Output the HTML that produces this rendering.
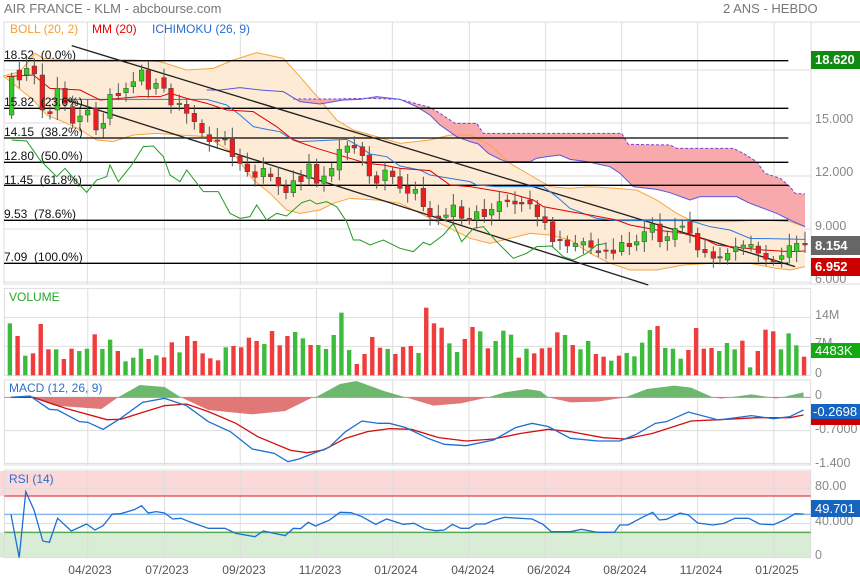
<!DOCTYPE html><html><head><meta charset="utf-8"><style>
body{margin:0;width:860px;height:580px;background:#fff;position:relative;overflow:hidden;font-family:"Liberation Sans",sans-serif}
.t{position:absolute;white-space:nowrap;line-height:1}
svg{position:absolute;left:0}
.ax{color:#888;font-size:12.5px;left:815px}
.fb{font-size:12px;color:#111;left:4px}
.bx{position:absolute;left:811px;width:49px;color:#fff;font-size:13px;font-weight:bold;padding-left:4px;box-sizing:border-box}
.dt{font-size:12px;color:#555;top:564px;transform:translateX(-50%)}
</style></head><body>
<div class="t" style="left:4px;top:2px;font-size:13px;color:#777">AIR FRANCE - KLM - abcbourse.com</div>
<div class="t" style="left:723px;top:2px;font-size:13px;color:#777">2 ANS - HEBDO</div>

<svg id="m" width="860" height="290" viewBox="0 0 2580 870" preserveAspectRatio="none" style="top:0">
<g stroke="#ddd" stroke-width="3" fill="none">
<rect x="12" y="66" width="3420" height="786"/>
<line x1="12" y1="66" x2="2433" y2="66"/><line x1="2433" y1="66" x2="2433" y2="852"/><line x1="12" y1="852" x2="2433" y2="852"/><line x1="12" y1="66" x2="12" y2="852"/>
<path d="M262 66V852M493 66V852M721 66V852M950 66V852M1177 66V852M1408 66V852M1637 66V852M1865 66V852M2093 66V852M2322 66V852"/>
<path d="M12 210H2433M12 369H2433M12 528H2433M12 687H2433M12 846H2433"/>
</g>
<g id="mg"></g>
</svg>

<div class="t" style="left:10px;top:23px;font-size:12px;color:#f5a030">BOLL (20, 2)</div>
<div class="t" style="left:92px;top:23px;font-size:12px;color:#e00">MM (20)</div>
<div class="t" style="left:152px;top:23px;font-size:12px;color:#2a6fd0">ICHIMOKU (26, 9)</div>
<div class="t fb" style="top:49px">18.52 &nbsp;(0.0%)</div>
<div class="t fb" style="top:96px">15.82 &nbsp;(23.6%)</div>
<div class="t fb" style="top:126px">14.15 &nbsp;(38.2%)</div>
<div class="t fb" style="top:150px">12.80 &nbsp;(50.0%)</div>
<div class="t fb" style="top:174px">11.45 &nbsp;(61.8%)</div>
<div class="t fb" style="top:208px">9.53 &nbsp;(78.6%)</div>
<div class="t fb" style="top:251px">7.09 &nbsp;(100.0%)</div>
<div class="t ax" style="top:113px">15.000</div>
<div class="t ax" style="top:166px">12.000</div>
<div class="t ax" style="top:220px">9.000</div>
<div class="t ax" style="top:273px">6.000</div>
<div class="bx" style="top:51px;height:18px;line-height:18px;background:#118a11">18.620</div>
<div class="bx" style="top:236px;height:19px;line-height:19px;background:#666">8.154</div>
<div class="bx" style="top:258px;height:18px;line-height:18px;background:#c00">6.952</div>

<svg id="b" width="860" height="295" viewBox="0 0 1568 885" preserveAspectRatio="none" style="top:285px">
<g id="bg"></g>
</svg>
<div class="t" style="left:9px;top:291px;font-size:12px;color:#2aa52a">VOLUME</div>
<div class="t" style="left:9px;top:382px;font-size:12px;color:#2a6fd0">MACD (12, 26, 9)</div>
<div class="t" style="left:9px;top:473px;font-size:12px;color:#2a6fd0">RSI (14)</div>
<div class="t ax" style="top:309px">14M</div>
<div class="t ax" style="top:337px">7M</div>
<div class="t ax" style="top:367px">0</div>
<div class="t ax" style="top:389px">0</div>
<div class="t ax" style="top:423px">-0.7000</div>
<div class="t ax" style="top:457px">-1.400</div>
<div class="t ax" style="top:480px">80.00</div>
<div class="t ax" style="top:515px">40.000</div>
<div class="t ax" style="top:549px">0</div>
<div class="bx" style="top:343px;height:15px;line-height:15px;background:#11aa11;font-weight:normal">4483K</div>
<div class="bx" style="top:418px;height:7px;background:#c00"></div>
<div class="bx" style="top:404px;height:15px;line-height:15px;background:#1565c0;font-weight:normal;padding-left:2px">-0.2698</div>
<div class="bx" style="top:500px;height:17px;line-height:17px;background:#1565c0;font-weight:normal">49.701</div>
<div class="t dt" style="left:90px">04/2023</div>
<div class="t dt" style="left:167px">07/2023</div>
<div class="t dt" style="left:244px">09/2023</div>
<div class="t dt" style="left:320px">11/2023</div>
<div class="t dt" style="left:396px">01/2024</div>
<div class="t dt" style="left:473px">04/2024</div>
<div class="t dt" style="left:549px">06/2024</div>
<div class="t dt" style="left:625px">08/2024</div>
<div class="t dt" style="left:701px">11/2024</div>
<div class="t dt" style="left:777px">01/2025</div>

<script>
var NS="http://www.w3.org/2000/svg";
function el(p,t,a){var e=document.createElementNS(NS,t);for(var k in a)e.setAttribute(k,a[k]);p.appendChild(e);return e}
function pts(a,o){o=o||0;return a.map(function(p){return (p[0]+o)+","+p[1]}).join(" ")}
function sh(a,o){return a.map(function(p){return [p[0]+o,p[1]]})}
var mg=document.getElementById("mg");
// Bollinger
var bu=[[10,228],[60,215],[105,160],[130,175],[200,180],[300,180],[400,180],[480,185],[560,210],[640,205],[700,180],[770,158],[850,175],[900,230],[960,300],[1010,360],[1060,390],[1130,410],[1200,430],[1290,420]].concat(sh([[60,405],[120,405],[180,435],[240,490],[300,525],[360,560],[420,565],[480,560],[560,565],[620,570],[680,600],[740,640],[790,665],[900,665],[1000,660],[1080,665],[1125,680]],1290));
var bl=[[10,228],[100,300],[140,345],[200,370],[250,395],[290,420],[340,425],[400,405],[470,400],[540,405],[620,410],[700,460],[760,540],[810,580],[860,630],[900,640],[960,630],[1000,610],[1050,595],[1130,600],[1200,610],[1290,655]].concat(sh([[60,685],[120,715],[180,730],[240,715],[300,700],[360,705],[420,720],[480,760],[540,790],[600,810],[680,810],[760,795],[840,790],[900,790],[960,790],[1040,805],[1080,810],[1125,800]],1290));
el(mg,"polygon",{points:pts(bu.concat(bl.slice().reverse())),fill:"#fdebd5"});
// cloud
var cu=[[880,297],[1000,297],[1100,295],[1200,298],[1290,322]].concat(sh([[30,340],[75,370],[140,370],[160,400],[575,400],[595,433],[720,435],[740,445],[910,445],[940,460],[980,485],[1005,520],[1050,535],[1080,560],[1095,580],[1125,582]],1290));
var cl=[[620,270],[660,270],[720,263],[780,270],[850,275],[900,305],[960,312],[1030,300],[1080,298],[1130,290],[1200,298],[1250,320],[1290,345]].concat(sh([[30,375],[80,410],[120,425],[145,432],[175,460],[210,478],[230,485],[300,485],[320,475],[350,470],[390,465],[420,478],[470,485],[540,500],[570,520],[610,560],[680,568],[720,578],[780,600],[810,590],[920,590],[940,600],[960,610],[1000,625],[1040,640],[1080,660],[1125,680]],1290));
el(mg,"polygon",{points:pts(cu.concat(cl.filter(function(p){return p[0]>=880}).reverse())),fill:"#f8a9ab"});
el(mg,"polyline",{points:pts(bu),fill:"none",stroke:"#f7a440","stroke-width":3});
el(mg,"polyline",{points:pts(bl),fill:"none",stroke:"#f7a440","stroke-width":3});
el(mg,"polyline",{points:pts(cu),fill:"none",stroke:"#7a3fd0","stroke-width":3,"stroke-dasharray":"9,6"});
el(mg,"polyline",{points:pts(cl),fill:"none",stroke:"#5a55e0","stroke-width":3});
// fib lines
[182,325,414,487,556,661,790].forEach(function(y){el(mg,"line",{x1:12,y1:y,x2:2365,y2:y,stroke:"#000","stroke-width":4})});
// channel
el(mg,"line",{x1:215,y1:137,x2:2385,y2:800,stroke:"#222","stroke-width":4});
el(mg,"line",{x1:200,y1:300,x2:1945,y2:855,stroke:"#222","stroke-width":4});
// blue ichimoku line
var kb=[[150,298],[620,298],[680,315],[720,345],[760,380],[800,388],[840,395],[870,415],[900,425],[1000,420],[1040,418],[1080,440],[1110,462],[1160,470],[1200,498],[1260,510],[1290,525]].concat(sh([[120,545],[140,555],[200,560],[340,560],[380,590],[420,625],[500,655],[560,662],[780,662],[840,680],[900,690],[960,715],[1125,718]],1290));
el(mg,"polyline",{points:pts(kb),fill:"none",stroke:"#2a7ae0","stroke-width":3});
var mm=[[20,230],[100,225],[150,265],[240,270],[300,300],[360,295],[420,290],[480,290],[510,280],[560,295],[620,310],[680,330],[760,335],[830,380],[880,420],[950,445],[1000,460],[1050,475],[1100,490],[1150,495],[1200,505],[1290,512]].concat(sh([[60,555],[120,560],[240,580],[310,600],[340,620],[420,635],[480,645],[560,660],[600,675],[680,690],[760,700],[830,720],[860,735],[900,740],[1000,750],[1080,755],[1125,753]],1290));
el(mg,"polyline",{points:pts(mm),fill:"none",stroke:"#e00000","stroke-width":3});
var ch=[[35,420],[80,423],[120,480],[170,530],[195,505],[225,540],[260,577],[290,540],[320,530],[330,495],[355,545],[395,495],[430,440],[460,438],[490,470],[510,525],[540,545],[560,510],[610,575],[655,575],[690,640],[720,655],[750,650],[770,615],[800,660],[830,640],[860,648],[905,608],[930,600],[950,612],[980,605],[1010,620],[1040,665],[1060,720],[1080,720],[1110,735],[1150,720],[1200,745],[1240,755],[1270,727],[1290,735]].concat(sh([[40,705],[70,670],[95,725],[130,685],[160,680],[200,725],[250,775],[290,760],[320,740],[365,738],[400,770],[430,780],[470,760],[500,735],[530,730]],1290));
el(mg,"polyline",{points:pts(ch),fill:"none",stroke:"#229922","stroke-width":3});
// candles
var C=[[35,230,345,'g'],[58,210,240,'r'],[80,205,225,'g'],[103,198,222,'r'],[127,225,330,'r'],[150,335,341,'r'],[172,265,330,'g'],[195,265,310,'r'],[218,320,370,'r'],[240,348,365,'g'],[263,330,345,'g'],[288,325,390,'r'],[310,370,385,'g'],[330,283,355,'g'],[355,280,287,'r'],[378,265,278,'g'],[400,245,260,'g'],[425,210,243,'g'],[445,210,268,'r'],[468,250,265,'g'],[492,233,265,'r'],[513,265,315,'r'],[538,310,314,'g'],[560,313,340,'r'],[583,340,365,'r'],[606,370,398,'r'],[628,404,425,'r'],[652,420,424,'r'],[675,416,420,'r'],[697,418,470,'r'],[720,468,490,'r'],[742,492,515,'r'],[765,515,532,'r'],[790,505,530,'g'],[812,522,530,'r'],[835,532,558,'r'],[858,558,578,'r'],[880,542,578,'g'],[903,528,545,'r'],[927,492,535,'g'],[950,493,550,'r'],[972,528,550,'g'],[995,505,528,'g'],[1018,448,510,'g'],[1042,438,457,'g'],[1063,436,444,'r'],[1087,440,467,'r'],[1108,465,528,'r'],[1130,527,550,'r'],[1155,510,542,'g'],[1178,513,530,'r'],[1200,530,565,'r'],[1223,558,580,'r'],[1246,568,580,'g'],[1270,565,620,'r']];
var R=[[0,625,650,'r'],[25,648,655,'r'],[48,645,652,'g'],[70,615,650,'g'],[95,620,655,'r'],[118,655,662,'r'],[140,635,660,'g'],[163,628,650,'r'],[185,628,645,'g'],[208,605,635,'g'],[232,600,605,'r'],[255,603,612,'r'],[275,607,612,'r'],[300,600,612,'r'],[322,615,650,'r'],[345,650,668,'r'],[368,665,725,'r'],[390,718,722,'r'],[412,720,738,'r'],[436,730,740,'g'],[460,725,735,'g'],[483,722,742,'r'],[505,752,758,'r'],[528,750,752,'r'],[550,750,760,'r'],[575,727,755,'g'],[598,730,740,'r'],[620,725,735,'g'],[643,695,725,'g'],[667,672,697,'g'],[690,672,725,'r'],[712,710,722,'g'],[735,685,718,'g'],[757,678,682,'g'],[780,665,700,'r'],[803,700,750,'r'],[825,748,758,'r'],[850,755,775,'r'],[870,770,772,'r'],[893,760,780,'g'],[917,740,755,'g'],[940,735,745,'g'],[963,733,742,'g'],[985,738,760,'r'],[1008,760,778,'r'],[1030,780,785,'r'],[1055,767,778,'g'],[1078,737,772,'g'],[1100,730,755,'g'],[1125,730,735,'r']];
R.forEach(function(c){C.push([c[0]+1290,c[1],c[2],c[3]])});
C.forEach(function(c,i){var w=12+(i*37%25);el(mg,"line",{x1:c[0],y1:c[1]-w,x2:c[0],y2:c[2]+12+(i*53%20),stroke:"#555","stroke-width":3});
el(mg,"rect",{x:c[0]-7,y:c[1],width:14,height:Math.max(4,c[2]-c[1]),fill:c[3]=='g'?'#33cc22':'#ee1c1c',stroke:"#444","stroke-width":1.5})});

// bottom panels
var bg=document.getElementById("bg");
var ns={"vector-effect":"non-scaling-stroke"};
function L(p,a){for(var k in ns)a[k]=ns[k];return el(bg,p,a)}
L("rect",{x:0,y:558,width:1478,height:75,fill:"#fdd8d8"});
L("rect",{x:0,y:742,width:1478,height:76,fill:"#d8ecd6"});
var gs={stroke:"#ddd","stroke-width":1,fill:"none"};
[[10,271],[285,540],[555,818]].forEach(function(r){L("rect",{x:8,y:r[0],width:1470,height:r[1]-r[0],stroke:"#ddd","stroke-width":1,fill:"none"})});
var vx=[160,300,438,577,716,855,994,1133,1272,1411];
vx.forEach(function(x){[[10,271],[285,540],[555,818]].forEach(function(r){L("line",{x1:x,y1:r[0],x2:x,y2:r[1],stroke:"#ddd","stroke-width":1})})});
[97,184,437,535,610,716].forEach(function(y){L("line",{x1:8,y1:y,x2:1478,y2:y,stroke:"#ddd","stroke-width":1})});
L("line",{x1:8,y1:633,x2:1478,y2:633,stroke:"#e06060","stroke-width":1.5});
L("line",{x1:8,y1:742,x2:1478,y2:742,stroke:"#55aa55","stroke-width":1.5});
L("line",{x1:8,y1:688,x2:1478,y2:688,stroke:"#88b8f0","stroke-width":1.5});
// volume
var V="G115,R153,G212,R205,R117,R193,G193,R222,R191,G198,G191,R148,G192,G164,R198,G229,G218,G191,R222,G211,R217,R172,G202,R153,R168,R205,R220,R226,G187,R183,R187,R158,R168,G177,R138,R181,R153,G141,G160,R180,G180,G192,G150,G83,G195,R237,R207,R156,R188,G192,R207,R186,R183,G204,R68,R115,R128,G175,G201,R162,R126,G139,R190,G168,G137,G149,R218,G191,R205,R190,R188,R142,G150,R180,G193,G168,R207,R215,G227,R212,G204,G214,G173,G135,R123,G189,G191,G221,R195,R129,R191,R189,G198,G174,G193,R167,G247,R198,R134,R139,G193,G145,G181,R215".split(",");
V.forEach(function(v,i){var x=18+i*(1448/(V.length-1));el(bg,"rect",{x:x-4,y:+v.slice(1),width:8,height:271-v.slice(1),fill:v[0]=='G'?'#3dbb3d':'#f03c3c'})});
// macd histogram
function area(a,c){el(bg,"polygon",{points:pts(a),fill:c})}
area([[215,337],[255,300],[300,306],[330,337]],"#6cb86c");
area([[575,337],[620,297],[650,288],[670,300],[700,318],[740,337]],"#6cb86c");
area([[890,337],[920,322],[960,312],[985,318],[1000,337]],"#6cb86c");
area([[1140,337],[1180,312],[1230,302],[1260,308],[1300,337]],"#6cb86c");
area([[1330,337],[1370,328],[1405,337]],"#6cb86c");
area([[1425,337],[1465,322],[1465,337]],"#6cb86c");
area([[60,337],[100,362],[150,368],[185,372],[215,337]],"#e07878");
area([[330,337],[380,375],[460,388],[520,378],[570,337]],"#e07878");
area([[740,337],[790,362],[840,355],[890,337]],"#e07878");
area([[1000,337],[1040,352],[1090,350],[1140,337]],"#e07878");
area([[1300,337],[1315,341],[1330,337]],"#e07878");area([[1405,337],[1415,341],[1425,337]],"#e07878");
L("line",{x1:8,y1:337,x2:1478,y2:337,stroke:"#999","stroke-width":1});
var mb=[[20,337],[55,333],[90,373],[105,375],[145,410],[160,412],[188,433],[220,400],[260,352],[300,340],[340,362],[380,410],[420,440],[460,492],[500,505],[525,530],[545,522],[600,487],[630,440],[660,408],[690,415],[710,415],[740,428],[780,460],[810,478],[850,482],[900,465],[940,428],[970,415],[1000,425],[1040,460],[1090,468],[1130,468],[1160,448],[1195,415],[1215,410],[1255,381],[1310,405],[1370,392],[1410,401],[1440,395],[1465,375]];
var mr=[[20,337],[60,337],[120,370],[195,404],[220,403],[260,382],[300,362],[340,357],[380,380],[430,415],[470,455],[530,496],[560,503],[590,495],[630,460],[670,440],[710,431],[750,433],[800,458],[850,468],[900,462],[950,445],[1000,433],[1040,440],[1100,458],[1140,462],[1190,445],[1260,408],[1310,404],[1380,398],[1440,398],[1465,390]];
L("polyline",{points:pts(mr),fill:"none",stroke:"#d01010","stroke-width":1.3});
L("polyline",{points:pts(mb),fill:"none",stroke:"#1e6fd0","stroke-width":1.3});
var rs=[[20,688],[35,818],[47,620],[62,675],[78,768],[90,772],[105,700],[130,738],[158,717],[173,735],[188,722],[205,687],[220,686],[245,674],[258,662],[270,684],[285,680],[300,684],[315,702],[330,700],[345,710],[380,730],[410,730],[430,745],[465,755],[480,738],[520,752],[535,730],[548,731],[562,712],[575,723],[600,706],[620,682],[640,683],[660,695],[685,718],[705,702],[735,718],[755,715],[775,732],[795,737],[810,735],[825,718],[840,730],[855,730],[868,717],[885,717],[900,706],[920,697],[970,702],[990,718],[1005,740],[1040,740],[1060,733],[1090,742],[1120,742],[1130,720],[1145,720],[1170,698],[1190,682],[1202,705],[1215,703],[1240,684],[1255,690],[1272,714],[1300,720],[1320,715],[1340,700],[1365,700],[1385,717],[1410,719],[1430,705],[1450,686],[1465,687]];
L("polyline",{points:pts(rs),fill:"none",stroke:"#1e6fd0","stroke-width":1.3});
</script>
</body></html>
